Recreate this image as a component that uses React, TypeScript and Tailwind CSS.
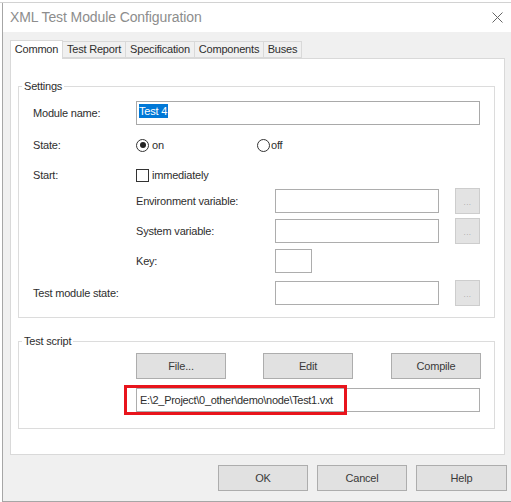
import React from "react";

const Field = ({ w, children }: { w: string; children?: React.ReactNode }) => (
  <div className={`${w} h-[24px] bg-white border border-[#adadad] flex items-center pl-[2px]`}>{children}</div>
);

const DotsButton = () => (
  <div className="ml-[16px] w-[25px] h-[26px] bg-[#e3e3e3] border border-[#cdcdcd] flex items-end justify-center pb-[6px]">
    <span className="text-[8px] leading-none text-[#a3a3a3] tracking-[0.5px]">...</span>
  </div>
);

const Button = ({ label, w = "w-[90px]", cls = "" }: { label: string; w?: string; cls?: string }) => (
  <div className={`${w} h-[26px] bg-[#e1e1e1] border border-[#adadad] flex items-center justify-center text-[#3a3a3a] ${cls}`}>
    {label}
  </div>
);

const Radio = ({ checked }: { checked?: boolean }) => (
  <div className="w-[13px] h-[13px] rounded-full border border-[#333] bg-white flex items-center justify-center">
    {checked && <div className="w-[6px] h-[6px] rounded-full bg-[#222]" />}
  </div>
);

const tabs = [
  { label: "Test Report", w: "w-[64px]" },
  { label: "Specification", w: "w-[70px]" },
  { label: "Components", w: "w-[70px]" },
  { label: "Buses", w: "w-[39px]" },
];

export default function App() {
  return (
    <div className="w-[511px] h-[502px] bg-white overflow-hidden flex flex-col font-['Liberation_Sans',Arial,sans-serif] text-[11px] tracking-[-0.2px] text-[#2e2e2e]">
      {/* strip of the window behind */}
      <div className="h-[3px] bg-white border-b border-[#d2d2d2]" />

      <div className="flex-1 flex flex-col ml-[2px] border-l border-b border-[#a6a6a6]">
        {/* Title bar */}
        <div className="h-[29px] bg-white flex items-center justify-between pl-[7px] pr-[8px]">
          <span className="text-[14px] tracking-[-0.1px] text-[#8d8d8d]">XML Test Module Configuration</span>
          <svg width="11" height="11" viewBox="0 0 11 11" className="text-[#666]">
            <path d="M0.5 0.5 L10.5 10.5 M10.5 0.5 L0.5 10.5" stroke="currentColor" strokeWidth="1" fill="none" />
          </svg>
        </div>

        {/* Body */}
        <div className="flex-1 bg-[#f0f0f0] pt-[8px] pl-[7px] pr-[6px] flex flex-col">
          {/* Tabs */}
          <div className="flex items-end h-[18px]">
            <div className="relative z-10 w-[53px] h-[19px] -mb-px bg-white border border-b-0 border-[#d9d9d9] flex items-center justify-center pb-[2px]">
              Common
            </div>
            {tabs.map((t) => (
              <div
                key={t.label}
                className={`${t.w} h-[17px] -ml-px bg-[#f0f0f0] border border-[#d9d9d9] flex items-center justify-center`}
              >
                {t.label}
              </div>
            ))}
          </div>

          {/* Tab panel */}
          <div className="h-[397px] bg-white border border-[#d9d9d9] pl-[7px] pr-[9px] pt-[20px]">
            {/* Settings */}
            <fieldset className="border border-[#dcdcdc] p-0 m-0">
              <legend className="ml-[3px] px-[2px] leading-[14px]">Settings</legend>
              <div className="pl-[14px] pt-[8px] pb-[11px] flex flex-col">
                <div className="flex items-center h-[24px]">
                  <span className="w-[103px]">Module name:</span>
                  <div className="w-[344px] h-[24px] bg-white border border-[#a9a9a9] pl-[2px] pt-[1px]">
                    <span className="inline-block bg-[#0078d7] text-white leading-[14px] pr-[1px]">Test 4</span>
                  </div>
                </div>

                <div className="flex items-center h-[20px] mt-[10px]">
                  <span className="w-[103px]">State:</span>
                  <div className="w-[121px] flex items-center gap-[3px]">
                    <Radio checked />
                    <span>on</span>
                  </div>
                  <div className="flex items-center gap-[1px]">
                    <Radio />
                    <span>off</span>
                  </div>
                </div>

                <div className="flex items-center h-[20px] mt-[10px]">
                  <span className="w-[103px]">Start:</span>
                  <div className="w-[13px] h-[13px] border border-[#333] bg-white" />
                  <span className="ml-[3px]">immediately</span>
                </div>

                <div className="flex items-center h-[26px] mt-[3px]">
                  <span className="w-[103px]" />
                  <span className="w-[139px]">Environment variable:</span>
                  <Field w="w-[164px]" />
                  <DotsButton />
                </div>

                <div className="flex items-center h-[26px] mt-[4px]">
                  <span className="w-[103px]" />
                  <span className="w-[139px]">System variable:</span>
                  <Field w="w-[164px]" />
                  <DotsButton />
                </div>

                <div className="flex items-center h-[26px] mt-[4px]">
                  <span className="w-[103px]" />
                  <span className="w-[139px]">Key:</span>
                  <Field w="w-[37px]" />
                </div>

                <div className="flex items-center h-[26px] mt-[6px]">
                  <span className="w-[242px]">Test module state:</span>
                  <Field w="w-[164px]" />
                  <DotsButton />
                </div>
              </div>
            </fieldset>

            {/* Test script */}
            <fieldset className="border border-[#dcdcdc] p-0 m-0 mt-[16px]">
              <legend className="ml-[3px] px-[2px] leading-[14px]">Test script</legend>
              <div className="pl-[117px] pt-[5px] pb-[16px] flex flex-col">
                <div className="flex">
                  <Button label="File..." />
                  <Button label="Edit" cls="ml-[37px]" />
                  <Button label="Compile" cls="ml-[38px]" />
                </div>
                <div className="relative mt-[9px]">
                  <Field w="w-[344px]">
                    <span className="pl-[1px] tracking-[-0.3px]">E:\2_Project\0_other\demo\node\Test1.vxt</span>
                  </Field>
                  {/* annotation */}
                  <div className="absolute left-[-12px] top-[-3px] w-[223px] h-[30px] border-[3px] border-[#e8141c]" />
                </div>
              </div>
            </fieldset>
          </div>

          {/* Dialog buttons */}
          <div className="flex justify-end mt-[10px] -mr-[2px]">
            <Button label="OK" cls="border-[#0078d7]" />
            <Button label="Cancel" cls="ml-[9px]" />
            <Button label="Help" w="w-[91px]" cls="ml-[9px]" />
          </div>
        </div>
      </div>
    </div>
  );
}
